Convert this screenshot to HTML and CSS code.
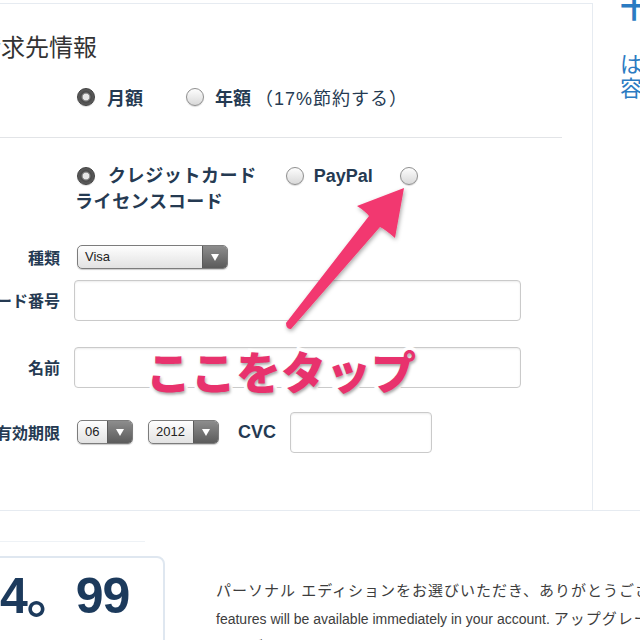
FILE: index.html
```html
<!DOCTYPE html>
<html lang="ja">
<head>
  <meta charset="UTF-8">
  <meta name="viewport" content="width=device-width, initial-scale=1.0">
  <title>請求先情報</title>
  <link rel="stylesheet" href="styles.css">
</head>
<body>
  <div class="top">
    <div class="main">
      <h2 class="title">請求先情報</h2>

      <div class="plan">
        <span class="radio checked"></span><b class="plan-label">月額</b>
        <span class="radio radio-year"></span><b class="plan-label">年額</b><span class="note">（17%節約する）</span>
      </div>

      <hr class="divider">

      <div class="payment"><span class="radio checked"></span><b class="pay-label">クレジットカード</b><span class="radio"></span><b class="pay-label">PayPal</b><span class="radio"></span><b class="pay-label">ライセンスコード</b></div>

      <div class="form">
        <div class="row row-type">
          <div class="label"><span>種類</span></div>
          <div class="select select-card"><span class="select-value">Visa</span><span class="select-arrow"></span></div>
        </div>
        <div class="row row-number">
          <div class="label"><span>カード番号</span></div>
          <input class="field field-wide" type="text">
        </div>
        <div class="row row-name">
          <div class="label"><span>名前</span></div>
          <input class="field field-wide" type="text">
        </div>
        <div class="row row-expiry">
          <div class="label"><span>有効期限</span></div>
          <div class="select select-month"><span class="select-value">06</span><span class="select-arrow"></span></div>
          <div class="select select-year"><span class="select-value">2012</span><span class="select-arrow"></span></div>
          <b class="cvc-label">CVC</b>
          <input class="field field-cvc" type="text">
        </div>
      </div>
    </div>

    <div class="side">
      <div class="side-title">十</div>
      <p class="side-text">は<br>容</p>
    </div>
  </div>

  <div class="bottom">
    <div class="price-col">
      <div class="price-rule"></div>
      <div class="price-box"><span class="price">4。99</span></div>
    </div>
    <p class="desc"><span class="ja">パーソナル エディションをお選びいただき、ありがとうございます。</span><br>features will be available immediately in your account. <span class="ja">アップグレード</span><br><span class="ja">ことができます。</span></p>
  </div>

  <!-- annotation drawn on top of the screenshot -->
  <svg class="arrow" width="640" height="640" viewBox="0 0 640 640">
    <defs>
      <filter id="shade" x="-20%" y="-20%" width="140%" height="140%">
        <feDropShadow dx="1" dy="2" stdDeviation="2" flood-color="#000" flood-opacity="0.35"/>
      </filter>
    </defs>
    <path d="M404 188 L357 206 Q365 211 369 216 L286 323 Q286 329 291 329 L380 227 Q386 230 395 238 Z" fill="#f2386f" filter="url(#shade)"/>
  </svg>
  <div class="tap">ここをタップ</div>
</body>
</html>
```

FILE: styles.css
```css
body {
  margin: 0;
  padding-top: 3px;
  background: #fff;
  font-family: "Liberation Sans", "Noto Sans CJK JP", sans-serif;
  color: #253a52;
  overflow: hidden;
  height: 640px;
  position: relative;
}
.top {
  display: flex;
  height: 507px;
  border-bottom: 1px solid #e6ebf1;
}
.main {
  width: 592px;
  flex: none;
  border-top: 1px solid #e6ebf1;
  border-right: 1px solid #e6ebf1;
}
.title {
  margin: 29px 0 0 -23px;
  font-size: 24px;
  line-height: 30px;
  font-weight: normal;
  color: #333;
}

/* radios */
.radio {
  display: inline-block;
  width: 16px;
  height: 16px;
  border: 1px solid #8f8f8f;
  border-radius: 50%;
  background: linear-gradient(#fdfdfd, #d9d9d9);
  box-shadow: 0 1px 1px rgba(0, 0, 0, 0.15);
  vertical-align: middle;
}
.radio.checked {
  border-color: #3e3e3e;
  background: radial-gradient(circle, #e6e6e6 0 3px, #9a9a9a 3.5px, #4a4a4a 5px, #5d5d5d 8px);
}

.plan {
  display: flex;
  align-items: center;
  height: 24px;
  margin-top: 22px;
  padding-left: 77px;
  font-size: 18px;
}
.plan-label {
  margin-left: 12px;
}
.radio-year {
  margin-left: 43px;
}
.plan .radio-year + .plan-label {
  margin-left: 11px;
}
.note {
  margin-left: 4px;
  font-weight: normal;
  letter-spacing: 1px;
}

.divider {
  width: 562px;
  margin: 28px 0 0;
  border: 0;
  border-top: 1px solid #e2e4e7;
}

.payment {
  width: 486px;
  margin-top: 25px;
  padding-left: 75px;
  font-size: 18px;
  line-height: 25px;
}
.payment .radio {
  margin-left: 2px;
}
.pay-label {
  display: inline-block;
  white-space: nowrap;
  margin: 0 27px 0 13px;
  letter-spacing: 0.6px;
  vertical-align: middle;
}
.pay-label:nth-of-type(2) {
  margin-right: 25px;
  margin-left: 10px;
  letter-spacing: 0;
}
.pay-label:last-child {
  margin-left: 0;
}

/* form rows */
.row {
  display: flex;
  align-items: center;
  gap: 14px;
}
.row-type { margin-top: 30px; height: 24px; }
.row-number { margin-top: 11px; }
.row-name { margin-top: 26px; }
.row-expiry { margin-top: 24px; height: 41px; }
.label {
  width: 60px;
  flex: none;
  display: flex;
  justify-content: flex-end;
  font-size: 16px;
  font-weight: bold;
  white-space: nowrap;
}

.select {
  display: flex;
  height: 22px;
  border: 1px solid #7c7c7c;
  border-radius: 5px;
  background: linear-gradient(#fefefe, #e2e2e2);
  box-shadow: 0 1px 1px rgba(0, 0, 0, 0.2);
  overflow: hidden;
  font-size: 13px;
  color: #222;
  flex: none;
}
.select-value {
  flex: 1;
  padding-left: 7px;
  line-height: 22px;
}
.select-arrow {
  width: 24px;
  background: linear-gradient(#8d8d8d, #5b5b5b);
  border-left: 1px solid #5a5a5a;
  position: relative;
}
.select-arrow::after {
  content: "";
  position: absolute;
  left: 8px;
  top: 8px;
  border-left: 4px solid transparent;
  border-right: 4px solid transparent;
  border-top: 7px solid #fff;
}
.select-card { width: 149px; margin-left: 3px; }
.select-month { width: 54px; margin-left: 3px; }
.select-year { width: 69px; margin-left: 1px; }

.field {
  height: 41px;
  box-sizing: border-box;
  border: 1px solid #cacaca;
  border-radius: 4px;
  box-shadow: inset 0 1px 2px rgba(0, 0, 0, 0.08);
  background: #fff;
  margin: 0;
  padding: 0 8px;
}
.field-wide { width: 447px; }
.field-cvc { width: 142px; flex: none; }
.cvc-label {
  margin-left: 5px;
  font-size: 18px;
}

/* right column */
.side {
  flex: 1;
  padding-left: 27px;
  color: #2b7bc2;
}
.side-title {
  margin-top: -10px;
  font-size: 28px;
  font-weight: bold;
  line-height: 32px;
}
.side-text {
  margin: 28px 0 0;
  font-size: 22px;
  line-height: 24px;
}

/* price + description */
.bottom {
  display: flex;
}
.price-col {
  width: 175px;
  flex: none;
  margin-left: -10px;
}
.price-rule {
  width: 155px;
  height: 1px;
  margin-top: 30px;
  background: #eef2f6;
}
.price-box {
  height: 120px;
  margin-top: 14px;
  padding: 13px 0 0 8px;
  border: 2px solid #dfe7f0;
  border-radius: 8px;
}
.price {
  font-size: 50px;
  line-height: 50px;
  font-weight: bold;
  color: #1c3a5c;
  white-space: nowrap;
  letter-spacing: -1px;
}
.desc {
  margin: 66px 0 0 51px;
  font-size: 14px;
  line-height: 27px;
  color: #3d3d3d;
  white-space: nowrap;
}
.ja {
  font-size: 15px;
  letter-spacing: 1px;
}

/* annotation */
.arrow {
  position: absolute;
  left: 0;
  top: 0;
}
.tap {
  position: absolute;
  left: 146px;
  top: 348px;
  font-family: "Noto Sans CJK JP", sans-serif;
  font-size: 45px;
  line-height: 45px;
  font-weight: 900;
  color: #e8326d;
  -webkit-text-stroke: 7px #fff;
  paint-order: stroke fill;
  text-shadow: 1px 2px 3px rgba(0, 0, 0, 0.35);
  white-space: nowrap;
}
```
